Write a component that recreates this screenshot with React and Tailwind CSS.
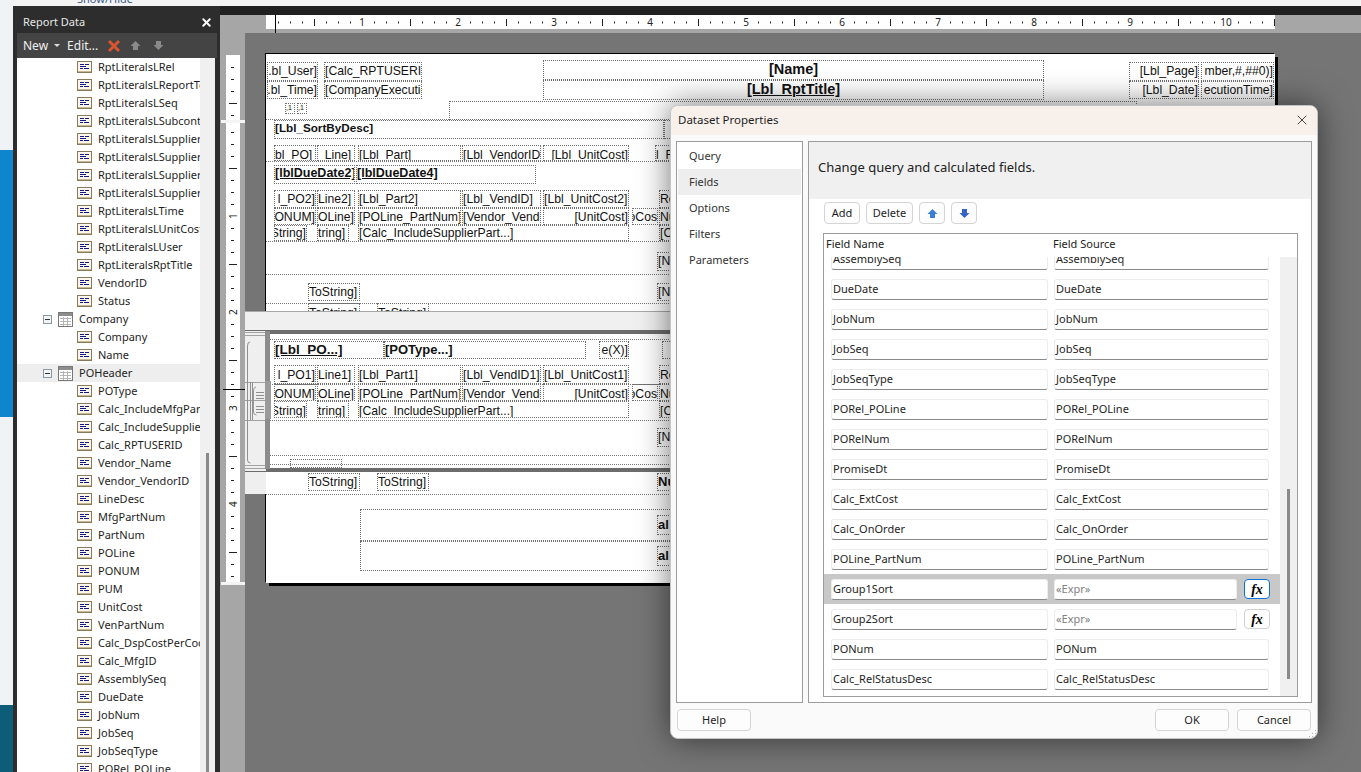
import { X } from "lucide-react";

const ui = "font-['Noto_Sans','Open_Sans',sans-serif]";

const treeRows = [
  "RptLiteralsLRel", "RptLiteralsLReportTemplate", "RptLiteralsLSeq", "RptLiteralsLSubcontract",
  "RptLiteralsLSupplierA", "RptLiteralsLSupplierB", "RptLiteralsLSupplierC", "RptLiteralsLSupplierD",
  "RptLiteralsLTime", "RptLiteralsLUnitCost", "RptLiteralsLUser", "RptLiteralsRptTitle",
  "VendorID", "Status", "#Company", "Company", "Name", "#POHeader", "POType",
  "Calc_IncludeMfgPart", "Calc_IncludeSupplier", "Calc_RPTUSERID", "Vendor_Name", "Vendor_VendorID",
  "LineDesc", "MfgPartNum", "PartNum", "POLine", "PONUM", "PUM", "UnitCost", "VenPartNum",
  "Calc_DspCostPerCode", "Calc_MfgID", "AssemblySeq", "DueDate", "JobNum", "JobSeq", "JobSeqType", "PORel_POLine",
];

const fieldRows = [
  ["AssemblySeq", "AssemblySeq"], ["DueDate", "DueDate"], ["JobNum", "JobNum"], ["JobSeq", "JobSeq"],
  ["JobSeqType", "JobSeqType"], ["PORel_POLine", "PORel_POLine"], ["PORelNum", "PORelNum"],
  ["PromiseDt", "PromiseDt"], ["Calc_ExtCost", "Calc_ExtCost"], ["Calc_OnOrder", "Calc_OnOrder"],
  ["POLine_PartNum", "POLine_PartNum"], ["Group1Sort", null, true], ["Group2Sort", null],
  ["PONum", "PONum"], ["Calc_RelStatusDesc", "Calc_RelStatusDesc"],
];

// report items, offsets are from the page corner
const labels = [
  ["left-[1px] top-[8px] w-[51px] h-[19px] justify-end", ".bl_User]"],
  ["left-[58px] top-[8px] w-[98px] h-[19px]", "[Calc_RPTUSERID]"],
  ["left-[1px] top-[27px] w-[51px] h-[18px] justify-end", ".bl_Time]"],
  ["left-[58px] top-[27px] w-[98px] h-[18px]", "[CompanyExecutionTime]"],
  ["left-[277px] top-[6px] w-[501px] h-[20px] justify-center font-bold text-[14.5px]", "[Name]"],
  ["left-[277px] top-[26px] w-[501px] h-[20px] justify-center font-bold underline text-[14.5px]", "[Lbl_RptTitle]"],
  ["left-[863px] top-[8px] w-[70px] h-[19px] justify-end", "[Lbl_Page]"],
  ["left-[935px] top-[8px] w-[73px] h-[19px] justify-end", "mber,#,##0)]"],
  ["left-[863px] top-[27px] w-[70px] h-[18px] justify-end", "[Lbl_Date]"],
  ["left-[935px] top-[27px] w-[73px] h-[18px] justify-end", "ecutionTime]"],
  ["left-[19px] top-[49px] w-[10px] h-[11px] text-[7px]", ",1"],
  ["left-[31px] top-[49px] w-[10px] h-[11px] text-[7px]", ",1"],
  ["left-[183px] top-[47px] w-[688px] h-[19px]", ""],
  ["left-[8px] top-[66px] w-[390px] h-[19px] font-bold items-start leading-[14px] text-[11.7px]", "[Lbl_SortByDesc]"],
  ["left-[398px] top-[66px] w-[100px] h-[19px]", ""],
  ["left-[8px] top-[91px] w-[42px] h-[16px] pt-[4px]", "bl_PO]"],
  ["left-[51px] top-[91px] w-[38px] h-[16px] pt-[4px]", "_Line]"],
  ["left-[92px] top-[91px] w-[103px] h-[16px] pt-[4px]", "[Lbl_Part]"],
  ["left-[196px] top-[91px] w-[79px] h-[16px] pt-[4px]", "[Lbl_VendorID]"],
  ["left-[277px] top-[91px] w-[86px] h-[16px] pt-[4px] justify-end", "[Lbl_UnitCost]"],
  ["left-[389px] top-[91px] w-[40px] h-[16px] pt-[4px]", "l_F"],
  ["left-[8px] top-[111px] w-[81px] h-[19px] font-bold underline items-start leading-[14px] text-[12.5px]", "[lblDueDate2]"],
  ["left-[90px] top-[111px] w-[180px] h-[19px] font-bold underline items-start leading-[14px] text-[12.5px]", "[lblDueDate4]"],
  ["left-[8px] top-[136px] w-[42px] h-[18px] justify-end", "l_PO2]"],
  ["left-[51px] top-[136px] w-[38px] h-[18px]", "Line2]"],
  ["left-[92px] top-[136px] w-[103px] h-[18px]", "[Lbl_Part2]"],
  ["left-[196px] top-[136px] w-[79px] h-[18px]", "[Lbl_VendID]"],
  ["left-[277px] top-[136px] w-[86px] h-[18px]", "[Lbl_UnitCost2]"],
  ["left-[393px] top-[136px] w-[40px] h-[18px]", "Re"],
  ["left-[8px] top-[154px] w-[42px] h-[17px] pt-[2px] justify-end", "ONUM]"],
  ["left-[51px] top-[154px] w-[38px] h-[17px] pt-[2px]", "OLine]"],
  ["left-[92px] top-[154px] w-[103px] h-[17px] pt-[2px]", "[POLine_PartNum]"],
  ["left-[196px] top-[154px] w-[79px] h-[17px] pt-[2px]", "[Vendor_VendorID]"],
  ["left-[277px] top-[154px] w-[86px] h-[17px] pt-[2px] justify-end", "[UnitCost]"],
  ["left-[366px] top-[154px] w-[26px] h-[17px] pt-[2px] justify-end", "oCos"],
  ["left-[393px] top-[154px] w-[40px] h-[17px] pt-[2px]", "Nu"],
  ["left-[8px] top-[171px] w-[33px] h-[16px] justify-end", "String]"],
  ["left-[51px] top-[171px] w-[32px] h-[16px]", "tring]"],
  ["left-[92px] top-[171px] w-[271px] h-[16px]", "[Calc_IncludeSupplierPart...]"],
  ["left-[393px] top-[171px] w-[40px] h-[16px]", "[C"],
  ["left-[391px] top-[198px] w-[40px] h-[19px]", "[N"],
  ["left-[42px] top-[229px] w-[52px] h-[18px]", "ToString]"],
  ["left-[391px] top-[229px] w-[40px] h-[18px]", "[N"],
  ["left-[42px] top-[249px] w-[52px] h-[18px] items-start", "ToString]"],
  ["left-[111px] top-[249px] w-[52px] h-[18px] items-start", "ToString]"],
  ["left-[8px] top-[287px] w-[110px] h-[18px] font-bold underline text-[13.5px]", "[Lbl_PO...]"],
  ["left-[118px] top-[287px] w-[202px] h-[18px] font-bold text-[13px]", "[POType...]"],
  ["left-[333px] top-[287px] w-[30px] h-[18px] justify-end", "e(X)]"],
  ["left-[396px] top-[287px] w-[40px] h-[18px]", ""],
  ["left-[8px] top-[311px] w-[42px] h-[19px] pt-[2px] justify-end", "l_PO1]"],
  ["left-[51px] top-[311px] w-[38px] h-[19px] pt-[2px]", "Line1]"],
  ["left-[92px] top-[311px] w-[103px] h-[19px] pt-[2px]", "[Lbl_Part1]"],
  ["left-[196px] top-[311px] w-[79px] h-[19px] pt-[2px]", "[Lbl_VendID1]"],
  ["left-[277px] top-[311px] w-[86px] h-[19px] pt-[2px]", "[Lbl_UnitCost1]"],
  ["left-[393px] top-[311px] w-[40px] h-[19px] pt-[2px]", "Re"],
  ["left-[8px] top-[330px] w-[42px] h-[17px] pt-[4px] justify-end", "ONUM]"],
  ["left-[51px] top-[330px] w-[38px] h-[17px] pt-[4px]", "OLine]"],
  ["left-[92px] top-[330px] w-[103px] h-[17px] pt-[4px]", "[POLine_PartNum]"],
  ["left-[196px] top-[330px] w-[79px] h-[17px] pt-[4px]", "[Vendor_VendorID]"],
  ["left-[277px] top-[330px] w-[86px] h-[17px] pt-[4px] justify-end", "[UnitCost]"],
  ["left-[366px] top-[330px] w-[26px] h-[17px] pt-[4px] justify-end", "oCos"],
  ["left-[393px] top-[330px] w-[40px] h-[17px] pt-[4px]", "Nu"],
  ["left-[8px] top-[347px] w-[33px] h-[17px] pt-[4px] justify-end", "String]"],
  ["left-[51px] top-[347px] w-[32px] h-[17px] pt-[4px]", "tring]"],
  ["left-[92px] top-[347px] w-[271px] h-[17px] pt-[4px]", "[Calc_IncludeSupplierPart...]"],
  ["left-[393px] top-[347px] w-[40px] h-[17px] pt-[4px]", "[C"],
  ["left-[391px] top-[374px] w-[40px] h-[19px]", "[N"],
  ["left-[24px] top-[405px] w-[52px] h-[9px] font-bold items-start pt-[3px]", "ToString]"],
  ["left-[42px] top-[419px] w-[52px] h-[18px]", "ToString]"],
  ["left-[111px] top-[419px] w-[52px] h-[18px]", "ToString]"],
  ["left-[391px] top-[419px] w-[40px] h-[18px] font-bold text-[13px]", "Nu"],
  ["left-[94px] top-[455px] w-[780px] h-[32px]", ""],
  ["left-[94px] top-[487px] w-[780px] h-[30px]", ""],
  ["left-[391px] top-[461px] w-[40px] h-[20px] font-bold text-[13px]", "al"],
  ["left-[391px] top-[492px] w-[40px] h-[20px] font-bold text-[13px]", "al"],
];

const sectionLines = [
  "top-[65px]", "top-[107px]", "top-[187px]", "top-[220px]", "top-[249px]",
  "top-[285px]", "top-[330px]", "top-[366px]", "top-[401px]", "top-[410px]", "top-[440px]",
];

const topTicks = Array.from({ length: 84 }, (_, i) => i + 1);
const sideTicksUpper = [1, 2, 3, 4, 5];
const sideTicksLower = Array.from({ length: 38 }, (_, i) => i + 1);

function FieldIcon() {
  return (
    <svg width="15" height="12" viewBox="0 0 15 12" className="shrink-0">
      <rect x="0.5" y="0.5" width="14" height="11" fill="#fbf7ec" stroke="#8a7a5c" />
      <path d="M3 3.5h4M8 3.5h4M3 5.5h6M3 7.5h3M7 7.5h5" stroke="#16168c" fill="none" />
      <path d="M1 10.5h13" stroke="#c8b88f" />
    </svg>
  );
}

function TableIcon() {
  return (
    <svg width="15" height="15" viewBox="0 0 15 15" className="shrink-0">
      <rect x="0.5" y="0.5" width="14" height="14" fill="#fff" stroke="#777" />
      <rect x="1" y="1" width="13" height="3" fill="#8d8d8d" />
      <path d="M2 6.5h11M2 9.5h11M2 12.5h11M5.500 5v9M9.500 5v9" stroke="#b5b5b5" fill="none" />
    </svg>
  );
}

function TreeRow({ name }) {
  if (name[0] === "#") {
    return (
      <div className={`flex items-center h-[18px] pl-[26px] ${name === "#POHeader" ? "bg-[#eeeeee]" : ""}`}>
        <span className="flex items-center justify-center w-[9px] h-[9px] border border-[#8a9aa6] bg-[#f4f4f4] mr-[6px]">
          <span className="w-[5px] h-px bg-[#333]" />
        </span>
        <TableIcon />
        <span className="ml-[6px]">{name.slice(1)}</span>
      </div>
    );
  }
  return (
    <div className="flex items-center h-[18px] pl-[60px]">
      <FieldIcon />
      <span className="ml-[6px] whitespace-nowrap">{name}</span>
    </div>
  );
}

function SmallArrow({ down, color }) {
  return (
    <svg width="11" height="11" viewBox="0 0 11 11">
      <path
        d={down ? "M3 1h5v4h2.500L5.500 10 .5 5H3z" : "M3 10h5V6h2.500L5.500 1 .5 6H3z"}
        fill={color}
      />
    </svg>
  );
}

function ReportPanel() {
  return (
    <div className={`w-[207px] shrink-0 bg-[#2d2d2d] flex flex-col pt-[7px] ${ui}`}>
      <div className="flex items-center justify-between h-[20px] pb-[1px] pl-[10px] pr-[5px] text-[11px] text-[#e6e6e6]">
        <span>Report Data</span>
        <X size={13} strokeWidth={3.5} className="text-white mr-[2px]" />
      </div>
      <div className="flex items-center h-[25px] ml-[4px] mr-[3px] bg-[#444444] text-[#f0f0f0] text-[12px] pl-[6px]">
        <span>New</span>
        <span className="ml-[6px] mr-[7px] border-x-[3px] border-t-[3px] border-x-transparent border-t-[#ddd]" />
        <span>Edit...</span>
        <svg width="14" height="14" viewBox="0 0 14 14" className="ml-[9px]">
          <path d="M2 2l10 10M12 2L2 12" stroke="#d8552d" strokeWidth="3" />
        </svg>
        <span className="ml-[9px] flex"><SmallArrow color="#8a8a8a" /></span>
        <span className="ml-[12px] flex"><SmallArrow down color="#8a8a8a" /></span>
      </div>
      <div className="flex flex-1 min-h-0 ml-[4px] mr-[5px]">
        <div className="w-[183px] bg-white text-[11px] text-[#1e1e1e] overflow-hidden">
          {treeRows.map((r, i) => <TreeRow key={i} name={r} />)}
        </div>
        <div className="w-[15px] bg-[#f0f0f0] flex flex-col items-center pt-[395px]">
          <div className="w-[3px] flex-1 bg-[#8a8a8a]" />
        </div>
      </div>
    </div>
  );
}

function TopRuler() {
  return (
    <div className="h-[18px] bg-[#a6a6a6] pl-[46px]">
      <svg width="1009" height="14" viewBox="0 0 1009 14" className="bg-white block overflow-visible">
        <path d="M9.500 0v18" stroke="#000" />
        {topTicks.map((i) => {
          const x = i * 12;
          if (i % 8 === 0) return null;
          return (
            <path key={i} d={i % 4 === 0 ? `M${x + .5} 4v7` : `M${x + .5} 6.500v2`} stroke="#222" />
          );
        })}
        {[1, 2, 3, 4, 5, 6, 7, 8, 9, 10].map((n) => (
          <text key={n} x={n * 96} y="11" textAnchor="middle" fontSize="10" fontFamily="Noto Sans" fill="#222">{n}</text>
        ))}
      </svg>
    </div>
  );
}

function SideRuler() {
  return (
    <div className="w-[25px] shrink-0 bg-[#a6a6a6] pt-[22px] relative">
      <svg width="14" height="528" viewBox="0 0 14 528" className="bg-white block ml-[6px]">
        {sideTicksUpper.map((i) => (
          <path key={i} d={i === 4 ? `M3 ${i * 12 + .5}h8` : `M5 ${i * 12 + .5}h3`} stroke="#222" />
        ))}
        {sideTicksLower.map((k) => {
          if (k % 8 === 0) return null;
          const y = 65 + k * 12;
          return (
            <path key={k} d={k % 8 === 4 ? `M3 ${y + .5}h8` : `M5 ${y + .5}h3`} stroke="#222" />
          );
        })}
        {[[1, 161], [2, 257], [3, 353], [4, 449]].map(([n, y]) => (
          <text key={n} x="7" y={y} textAnchor="middle" dominantBaseline="central" fontSize="10"
            fontFamily="Noto Sans" fill="#222" transform={`rotate(-90 7 ${y})`}>{n}</text>
        ))}
      </svg>
      <div className="absolute left-px right-0 top-[87px] h-[3px] bg-[#f4f4f4]" />
      <div className="absolute left-px right-0 top-[549px] h-[3px] bg-[#f4f4f4]" />
      <div className="absolute left-[3px] right-0 top-[356px] h-px bg-black" />
    </div>
  );
}

function GroupGutter() {
  return (
    <svg width="26" height="140" viewBox="0 0 26 140" className="absolute left-[-21px] top-[277px]">
      <rect width="21" height="140" fill="#efefef" />
      <path d="M0 1.500h20M0 4.500h20M0 51.500h20M0 69.500h20M0 89.500h20M0 134.500h20M0 137.500h20" stroke="#a2a2a2" />
      <path d="M5 11Q2.500 11 2.500 15v114q0 3 3 3" stroke="#8f8f8f" fill="none" />
      <path d="M5.500 51v38M7.500 51v38" stroke="#8f8f8f" fill="none" />
      <path d="M11 56Q8.500 56 8.500 60v21q0 3 3 3" stroke="#9a9a9a" fill="none" />
      <path d="M11 61.500h8M11 64.500h8M11 67.500h8M11 75.500h8M11 78.500h8M11 81.500h8" stroke="#8f8f8f" />
      <rect x="20" y="0" width="5" height="50" fill="#8c8c8c" />
      <rect x="20" y="50" width="6" height="38" fill="#9a9a9a" />
      <rect x="20" y="88" width="5" height="50" fill="#8c8c8c" />
    </svg>
  );
}

function ReportPage() {
  return (
    <div className="absolute left-[21px] top-[21px] w-[1009px] h-[529px] bg-white shadow-[-1px_-1px_0_#000,3px_3px_0_#000] font-['Liberation_Sans',sans-serif] text-[12.200px] text-[#111]">
      {sectionLines.map((c) => (
        <div key={c} className={`absolute left-0 w-full border-t border-dotted border-[#777] ${c}`} />
      ))}
      {labels.map(([c, t], i) => (
        <div key={i} className={`absolute flex items-center overflow-hidden whitespace-nowrap border border-dotted border-[#6f6f6f] ${c}`}>{t}</div>
      ))}
      <div className="absolute left-[-21px] top-[257px] w-[1030px] h-[20px] bg-[#f0f0f0] border-y border-[#a8a8a8]" />
      <div className="absolute left-[-21px] top-[276px] w-[1030px] h-[4px] bg-[#6c6c6c]" />
      <div className="absolute left-[-21px] top-[414px] w-[1030px] h-[4px] bg-[#6c6c6c]" />
      <div className="absolute left-[-21px] top-[418px] w-[21px] h-[22px] bg-[#efefef]" />
      <GroupGutter />
    </div>
  );
}

function InputBox({ value, muted, w }) {
  return (
    <div className={`h-[21px] flex items-center pl-px bg-white border border-[#ececec] border-b-[#8a8a8a] rounded-[3px] whitespace-nowrap ${w} ${muted ? "text-[#808080]" : "text-[#1e1e1e]"}`}>
      {value}
    </div>
  );
}

function FxButton({ focused }) {
  return (
    <div className={`ml-[7px] w-[26px] h-[20px] flex items-center justify-center bg-white rounded-[4px] border font-['Liberation_Serif',serif] italic font-bold text-[14px] text-black ${focused ? "border-[#0a74d8]" : "border-[#d0d0d0]"}`}>
      fx
    </div>
  );
}

function FieldRow({ name, source, selected }) {
  const isExpr = source === null;
  return (
    <div className={`h-[30px] flex items-center pl-[7px] shrink-0 ${selected ? "bg-[#c8c8c8]" : ""}`}>
      <InputBox value={name} w="w-[217px] mr-[6px]" />
      {isExpr ? (
        <>
          <InputBox value="«Expr»" muted w="w-[183px]" />
          <FxButton focused={selected} />
        </>
      ) : (
        <InputBox value={source} w="w-[215px]" />
      )}
    </div>
  );
}

function DialogButton({ children, className }) {
  return (
    <div className={`h-[22px] w-[74px] flex items-center justify-center bg-[#fdfdfd] border border-[#d4d4d4] rounded-[4px] ${className || ""}`}>
      {children}
    </div>
  );
}

function DatasetDialog() {
  return (
    <div className={`absolute left-[670px] top-[105px] w-[648px] h-[634px] flex flex-col rounded-[8px] bg-[#fafafa] border border-[#c4c4c4] shadow-[0_0_32px_rgba(0,0,0,0.55)] text-[11px] text-[#1e1e1e] overflow-hidden ${ui}`}>
      <div className="h-[29px] shrink-0 bg-[#f8f0eb] flex items-center justify-between pl-[7px] pr-[7px] pb-[2px] text-[11.500px]">
        <span>Dataset Properties</span>
        <X size={16} strokeWidth={1.25} className="text-[#222]" />
      </div>
      <div className="flex flex-1 min-h-0 px-[5px] pt-[6px]">
        <div className="w-[127px] h-[562px] shrink-0 bg-white border border-[#9c9c9c] p-px mr-[5px]">
          {["Query", "Fields", "Options", "Filters", "Parameters"].map((t, i) => (
            <div key={t} className={`h-[26px] flex items-center pl-[11px] text-[#333] ${i === 1 ? "bg-[#eeeeee]" : ""}`}>{t}</div>
          ))}
        </div>
        <div className="w-[504px] h-[562px] flex flex-col bg-white border border-[#9c9c9c]">
          <div className="h-[57px] shrink-0 bg-[#f0f0f0] flex items-center pl-[9px] pb-[6px] text-[13px] text-[#222]">
            Change query and calculated fields.
          </div>
          <div className="flex items-center gap-[6px] pl-[15px] mt-[2px] h-[24px] shrink-0">
            <div className="h-[22px] w-[36px] flex items-center justify-center bg-[#fdfdfd] border border-[#d4d4d4] rounded-[4px]">Add</div>
            <div className="h-[22px] w-[47px] flex items-center justify-center bg-[#fdfdfd] border border-[#d4d4d4] rounded-[4px]">Delete</div>
            <div className="h-[22px] w-[26px] flex items-center justify-center bg-[#fdfdfd] border border-[#d4d4d4] rounded-[4px]"><SmallArrow color="#3b7ddd" /></div>
            <div className="h-[22px] w-[26px] flex items-center justify-center bg-[#fdfdfd] border border-[#d4d4d4] rounded-[4px]"><SmallArrow down color="#3565c4" /></div>
          </div>
          <div className="ml-[14px] mt-[8px] w-[475px] h-[464px] flex flex-col border border-[#9c9c9c] overflow-hidden">
            <div className="h-[23px] shrink-0 flex items-center pl-[2px] pb-[2px] text-[#222]">
              <span className="w-[227px]">Field Name</span>
              <span>Field Source</span>
            </div>
            <div className="flex flex-1 min-h-0">
              <div className="w-[456px] flex flex-col overflow-hidden">
                <div className="-mt-[13px]">
                  {fieldRows.map(([n, s, sel]) => (
                    <FieldRow key={n} name={n} source={s} selected={sel} />
                  ))}
                </div>
              </div>
              <div className="flex-1 bg-[#f0f0f0] flex flex-col items-center pt-[232px] pb-[17px]">
                <div className="w-[3px] flex-1 bg-[#8a8a8a]" />
              </div>
            </div>
          </div>
        </div>
      </div>
      <div className="h-[36px] shrink-0 flex items-center pl-[6px] pr-[6px] relative">
        <DialogButton>Help</DialogButton>
        <div className="flex-1" />
        <DialogButton className="mr-[8px]">OK</DialogButton>
        <DialogButton>Cancel</DialogButton>
        <svg width="9" height="9" viewBox="0 0 9 9" className="absolute right-0 bottom-0">
          <path d="M7 1h1v1H7zM4 4h1v1H4zM7 4h1v1H7zM1 7h1v1H1zM4 7h1v1H4zM7 7h1v1H7z" fill="#b0b0b0" />
        </svg>
      </div>
    </div>
  );
}

export default function App() {
  return (
    <div className="relative flex w-[1361px] h-[772px] overflow-hidden bg-[#757575]">
      <div className="w-[13px] shrink-0 flex flex-col bg-[#eff3f6]">
        <div className="h-[150px]" />
        <div className="h-[267px] bg-[#0f85cc]" />
        <div className="flex-1" />
        <div className="h-[67px] bg-[#0d5c78]" />
      </div>
      <div className="flex-1 flex flex-col min-w-0">
        <div className={`h-[6px] shrink-0 bg-[#f3f3f3] overflow-hidden text-[11px] leading-none text-[#3b5a88] pl-[64px] ${ui}`}>
          <span className="block -mt-[7px]">Show/Hide</span>
        </div>
        <div className="absolute left-[13px] top-[6px] bottom-0 flex">
          <ReportPanel />
        </div>
        <div className="ml-[207px] flex-1 flex flex-col min-h-0">
          <div className="h-[9px] shrink-0 bg-[#202020]" />
          <TopRuler />
          <div className="flex flex-1 min-h-0">
            <SideRuler />
            <div className="flex-1 bg-[#757575] relative">
              <ReportPage />
            </div>
          </div>
        </div>
      </div>
      <DatasetDialog />
    </div>
  );
}
